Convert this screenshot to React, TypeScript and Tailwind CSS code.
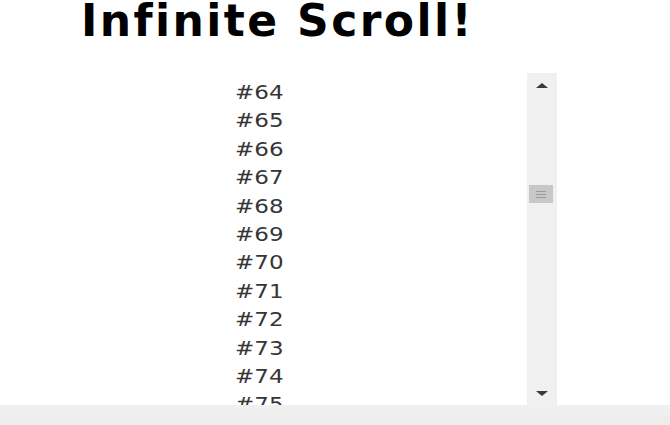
const items = Array.from({ length: 12 }, (_, i) => 64 + i);

function Scrollbar() {
	return (
		<div className="flex w-[30px] flex-col items-center bg-[#f0f0f0]">
			<div className="flex h-[24px] w-full items-center justify-center">
				<div className="h-0 w-0 border-x-[6px] border-b-[5px] border-x-transparent border-b-[#3a3a3a]" />
			</div>
			<div className="relative w-full flex-1">
				<div className="absolute left-[2px] top-[88px] flex h-[18px] w-[24px] flex-col items-center justify-center gap-[2px] bg-[#c8c8c8]">
					<div className="h-px w-[10px] bg-[#9a9a9a]" />
					<div className="h-px w-[10px] bg-[#9a9a9a]" />
					<div className="h-px w-[10px] bg-[#9a9a9a]" />
				</div>
			</div>
			<div className="flex h-[24px] w-full items-center justify-center">
				<div className="h-0 w-0 border-x-[6px] border-t-[5px] border-x-transparent border-t-[#3a3a3a]" />
			</div>
		</div>
	);
}

export default function App() {
	return (
		<div
			className="flex h-[425px] w-[670px] flex-col overflow-hidden bg-white"
			style={{ fontFamily: '"DejaVu Sans", "Open Sans", sans-serif' }}
		>
			<h1 className="-mt-px pl-[81px] text-[44px] font-bold leading-none tracking-[2.4px] text-black">
				Infinite Scroll!
			</h1>
			<div className="mt-[30px] flex h-[332px]">
				<div className="w-[527px] overflow-hidden pl-[235px] pt-[5px]">
					{items.map((n) => (
						<div key={n} className="h-[28.4px] text-[20px] leading-[28.4px] text-[#363636]">
							<span className="inline-block origin-left scale-x-[1.15]">#{n}</span>
						</div>
					))}
				</div>
				<Scrollbar />
			</div>
			<div className="flex flex-1 flex-col bg-[#f0f0f0]">
				<div className="h-[10px]" />
				<div className="flex-1 bg-[#ededed]" />
			</div>
		</div>
	);
}
